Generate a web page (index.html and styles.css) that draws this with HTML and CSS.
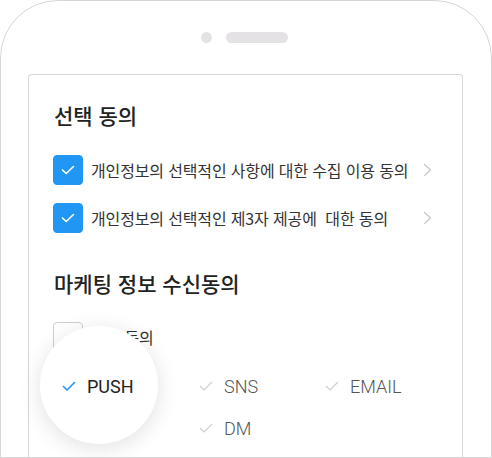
FILE: index.html
```html
<!DOCTYPE html>
<html lang="ko">
<head>
  <meta charset="UTF-8">
  <meta name="viewport" content="width=device-width, initial-scale=1.0">
  <title>선택 동의</title>
  <link rel="stylesheet" href="styles.css">
</head>
<body>
  <div class="phone">
    <div class="speaker">
      <span class="camera"></span>
      <span class="grill"></span>
    </div>

    <div class="card">
      <h2 class="title">선택 동의</h2>

      <div class="agree-row">
        <span class="checkbox checked">
          <svg width="14" height="10" viewBox="0 0 14 10"><path d="M1.5 5 L5.2 8.5 L12.5 1.5" fill="none" stroke="#fff" stroke-width="1.6" stroke-linecap="round" stroke-linejoin="round"/></svg>
        </span>
        <span class="agree-text">개인정보의 선택적인 사항에 대한 수집 이용 동의</span>
        <svg class="chevron" width="9" height="14" viewBox="0 0 9 14"><path d="M1 1 L7.5 7 L1 13" fill="none" stroke="#c9c9c9" stroke-width="1.4"/></svg>
      </div>

      <div class="agree-row">
        <span class="checkbox checked">
          <svg width="14" height="10" viewBox="0 0 14 10"><path d="M1.5 5 L5.2 8.5 L12.5 1.5" fill="none" stroke="#fff" stroke-width="1.6" stroke-linecap="round" stroke-linejoin="round"/></svg>
        </span>
        <span class="agree-text">개인정보의 선택적인 제3자 제공에&nbsp; 대한 동의</span>
        <svg class="chevron" width="9" height="14" viewBox="0 0 9 14"><path d="M1 1 L7.5 7 L1 13" fill="none" stroke="#c9c9c9" stroke-width="1.4"/></svg>
      </div>

      <h2 class="title second">마케팅 정보 수신동의</h2>

      <div class="agree-row">
        <span class="checkbox"></span>
        <span class="agree-text">전체 동의</span>
      </div>

      <div class="options">
        <div class="option on spot">
          <svg width="14" height="10" viewBox="0 0 14 10"><path d="M1 5 L5 9 L13 1" fill="none" stroke="#2196f3" stroke-width="1.6"/></svg>
          <span>PUSH</span>
        </div>
        <div class="option">
          <svg width="14" height="10" viewBox="0 0 14 10"><path d="M1 5 L5 9 L13 1" fill="none" stroke="#cfcfcf" stroke-width="1.2"/></svg>
          <span>SNS</span>
        </div>
        <div class="option">
          <svg width="14" height="10" viewBox="0 0 14 10"><path d="M1 5 L5 9 L13 1" fill="none" stroke="#cfcfcf" stroke-width="1.2"/></svg>
          <span>EMAIL</span>
        </div>
        <div class="option dm">
          <svg width="14" height="10" viewBox="0 0 14 10"><path d="M1 5 L5 9 L13 1" fill="none" stroke="#cfcfcf" stroke-width="1.2"/></svg>
          <span>DM</span>
        </div>
      </div>
    </div>
  </div>
</body>
</html>
```

FILE: styles.css
```css
* {
  margin: 0;
  padding: 0;
  box-sizing: border-box;
}

body {
  background-color: #fff;
  font-family: Roboto, "Noto Sans CJK KR", sans-serif;
  width: 492px;
  height: 458px;
  overflow: hidden;
}

.phone {
  width: 492px;
  height: 458px;
  border: 1px solid #d6d6d6;
  border-radius: 58px 58px 0 0;
  display: flex;
  flex-direction: column;
  overflow: hidden;
}

.speaker {
  display: flex;
  justify-content: center;
  align-items: center;
  gap: 14px;
  margin-top: 31px;
  height: 11px;
  padding-right: 4px;
}

.camera {
  width: 11px;
  height: 11px;
  border-radius: 50%;
  background-color: #e4e2e4;
}

.grill {
  width: 62px;
  height: 11px;
  border-radius: 6px;
  background-color: #e4e2e4;
}

.card {
  flex: 1;
  margin: 31px 28px 0 27px;
  border: 1px solid #d6d6d6;
  border-bottom: none;
  border-radius: 4px 4px 0 0;
  padding: 25px 30px 0 24px;
}

.title {
  font-family: "Noto Sans CJK KR", sans-serif;
  font-size: 21px;
  font-weight: 500;
  line-height: 30px;
  color: #222;
  margin-bottom: 25px;
  padding-left: 1px;
}

.title.second {
  margin-top: 35px;
  margin-bottom: 24px;
}

.agree-row {
  display: flex;
  align-items: center;
  height: 30px;
  margin-bottom: 18px;
}

.checkbox {
  width: 30px;
  height: 30px;
  border: 1px solid #cfcfcf;
  border-radius: 4px;
  background-color: #fff;
  display: flex;
  align-items: center;
  justify-content: center;
  flex-shrink: 0;
}

.checkbox.checked {
  background-color: #2196f3;
  border-color: #2196f3;
}

.agree-text {
  font-family: "Noto Sans CJK KR", sans-serif;
  font-size: 16px;
  letter-spacing: -0.15px;
  color: #333;
  margin-left: 8px;
  white-space: nowrap;
}

.chevron {
  margin-left: auto;
}

.options {
  display: grid;
  grid-template-columns: 137px 126px auto;
  row-gap: 12px;
  margin-top: 19px;
  margin-left: 9px;
}

.option {
  display: flex;
  align-items: center;
  gap: 11px;
  height: 30px;
  font-size: 18px;
  font-weight: 300;
  color: #555;
}

.option.on {
  color: #222;
  font-weight: 400;
}

.option.dm {
  grid-column: 2;
}

/* spotlight circle around the highlighted option */
.spot {
  position: relative;
  z-index: 1;
}

.spot::before {
  content: '';
  position: absolute;
  left: -22px;
  top: -45px;
  width: 118px;
  height: 118px;
  border-radius: 50%;
  background-color: #fff;
  box-shadow: 0 4px 22px rgba(0, 0, 0, 0.12);
  z-index: -1;
}
```
